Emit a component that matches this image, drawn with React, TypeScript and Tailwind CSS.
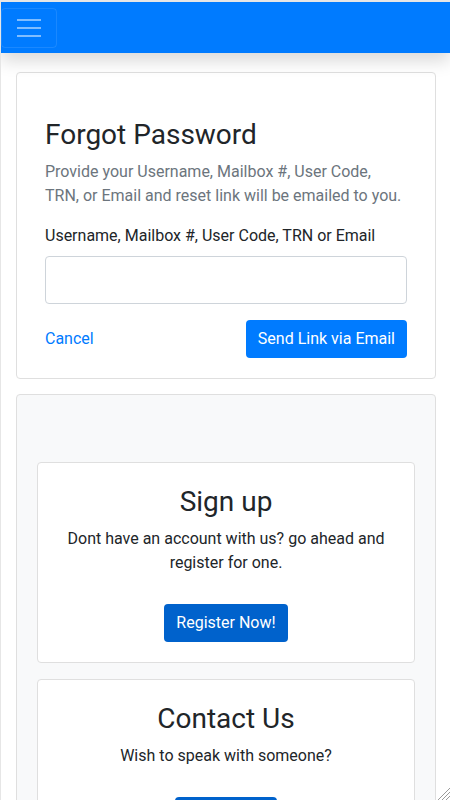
import React from "react";

const font = { fontFamily: 'Roboto, "Noto Sans", "Liberation Sans", sans-serif' };

function Toggler() {
  return (
    <button
      type="button"
      aria-label="Toggle navigation"
      className="flex h-10 w-14 flex-col items-center justify-center gap-[6px] rounded border border-white/10"
    >
      <span className="block h-[2px] w-6 bg-white/50" />
      <span className="block h-[2px] w-6 bg-white/50" />
      <span className="block h-[2px] w-6 bg-white/50" />
    </button>
  );
}

function InfoCard({
  title,
  text,
  action,
  color,
}: {
  title: string;
  text: string;
  action: string;
  color: string;
}) {
  return (
    <div className="rounded border border-[#dfdfdf] bg-white px-5 pt-[22px] pb-5 text-center">
      <h3 className="mb-2 text-[28px] leading-[34px] font-normal text-[#212529]">{title}</h3>
      <p className="text-base leading-6 text-[#212529]">{text}</p>
      <button
        type="button"
        className={`mt-[29px] h-[38px] rounded px-3 text-base text-white ${color}`}
      >
        {action}
      </button>
    </div>
  );
}

export default function App() {
  return (
    <div
      className="relative h-screen overflow-hidden border-t-2 border-l border-[#e6e6e6] bg-white"
      style={font}
    >
      <nav className="relative z-10 flex h-[51px] items-center bg-[#007bff] shadow-[0_8px_16px_rgba(0,0,0,0.15)]">
        <Toggler />
      </nav>

      <div className="flex flex-col gap-[15px] pt-[19px] pr-[14px] pl-[15px]">
        <div className="rounded border border-[#dfdfdf] bg-white px-[28px] pt-[45px] pb-5">
          <h3 className="mb-2 text-[28px] leading-[34px] font-normal text-[#212529]">
            Forgot Password
          </h3>
          <p className="mb-4 text-base leading-6 text-[#6c757d]">
            Provide your Username, Mailbox #, User Code, TRN, or Email and reset link will be
            emailed to you.
          </p>
          <label className="mb-2 block text-base leading-6 text-[#212529]">
            Username, Mailbox #, User Code, TRN or Email
          </label>
          <input
            type="text"
            className="mb-4 block h-12 w-full rounded border border-[#ced4da] px-4 text-lg outline-none"
          />
          <div className="flex items-center justify-between">
            <a href="#" className="text-base text-[#007bff]">
              Cancel
            </a>
            <button
              type="button"
              className="h-[38px] rounded bg-[#007bff] px-3 text-base text-white"
            >
              Send Link via Email
            </button>
          </div>
        </div>

        <div className="flex flex-col gap-4 rounded border border-[#dfdfdf] bg-[#f8f9fa] px-5 pt-[67px] pb-5">
          <InfoCard
            title="Sign up"
            text="Dont have an account with us? go ahead and register for one."
            action="Register Now!"
            color="bg-[#0062cc]"
          />
          <InfoCard
            title="Contact Us"
            text="Wish to speak with someone?"
            action="Contact Us"
            color="bg-[#0062cc]"
          />
        </div>
      </div>

      <svg
        className="pointer-events-none fixed right-0 bottom-0"
        width="13"
        height="13"
        viewBox="0 0 13 13"
      >
        <path d="M13 1 L1 13 M13 5 L5 13 M13 9 L9 13" stroke="#9a9a9a" strokeWidth="1" />
      </svg>
    </div>
  );
}
